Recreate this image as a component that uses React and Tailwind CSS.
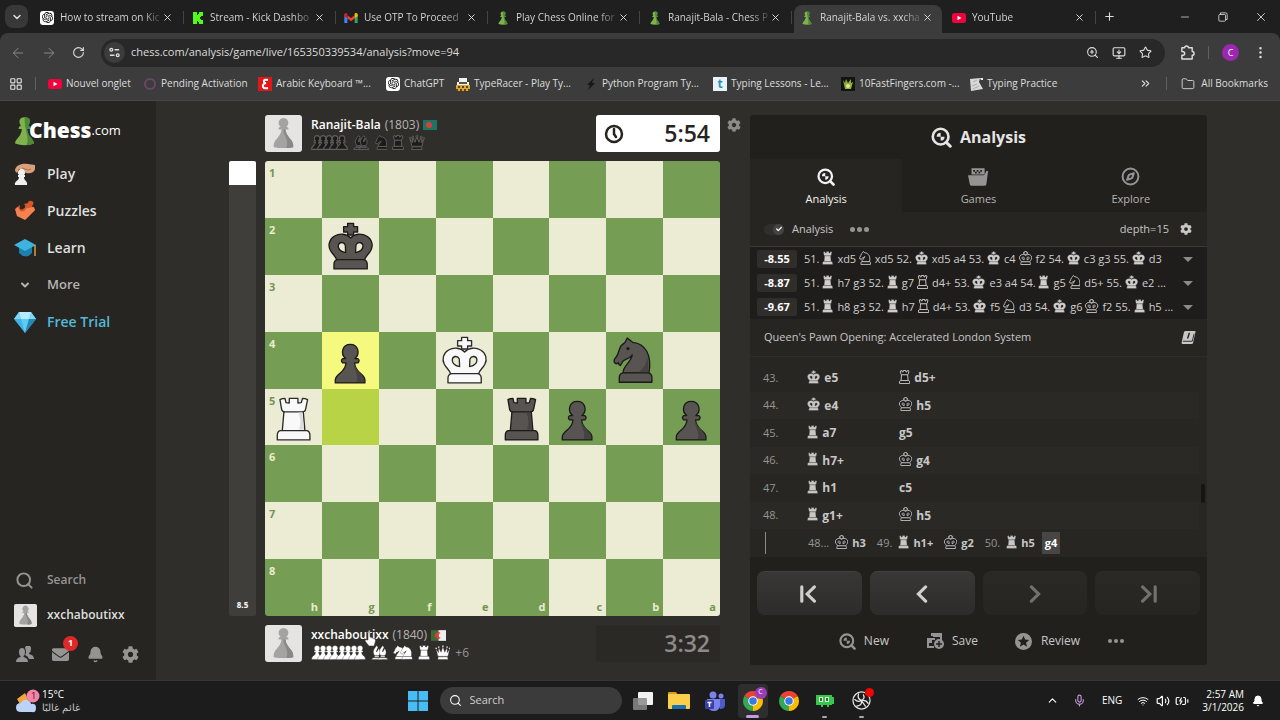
import { Fragment } from "react";
import {
  ArrowLeft,
  ArrowRight,
  BatteryCharging,
  Bell,
  ChevronDown,
  ChevronUp,
  ChevronsRight,
  Compass,
  EllipsisVertical,
  Folder,
  LayoutGrid,
  Mic,
  Minus,
  MonitorDown,
  Plus,
  RotateCw,
  Search,
  Star,
  Volume2,
  Wifi,
  X,
  ZoomIn,
} from "lucide-react";
import { FaCheck, FaCog, FaEnvelope } from "react-icons/fa";
import { SiOpenai } from "react-icons/si";

const CROSS = "M77 51V42H65V26H77V16H95V26H107V42H95V51Z";

const SHAPES = {
  K: {
    box: "17 12 138 146",
    parts: [
      CROSS,
      "M86 60C98 46 120 46 134 54C150 63 155 82 147 97C141 109 131 114 128 126H44C41 114 31 109 25 97C17 82 22 63 38 54C52 46 74 46 86 60ZM71 104C56 101 48 92 49 82C51 72 65 70 70 81ZM101 104C116 101 124 92 123 82C121 72 107 70 102 81Z",
      "M47 125H125Q136 127 136 139V153H36V139Q36 127 47 125Z",
    ],
  },
  Q: {
    box: "10 14 152 144",
    parts: [
      "M20 50L44 88L46 38L68 84L86 30L104 84L126 38L128 88L152 50L134 122H38Z",
      "M12 46A9 9 0 1 0 30 46A9 9 0 1 0 12 46ZM37 34A9 9 0 1 0 55 34A9 9 0 1 0 37 34ZM77 26A9 9 0 1 0 95 26A9 9 0 1 0 77 26ZM117 34A9 9 0 1 0 135 34A9 9 0 1 0 117 34ZM142 46A9 9 0 1 0 160 46A9 9 0 1 0 142 46Z",
      "M42 128H130L136 153H36Z",
    ],
  },
  R: {
    box: "32 23 108 135",
    parts: [
      "M57 67H115L120 126H52Z",
      "M45 32Q52 28 60 28L63 41L73 42V28H99V42L109 41L113 28Q121 28 128 32L122 61Q121 69 112 69H60Q52 69 50 61Z",
      "M46 125H126Q135 127 135 139V153H37V139Q37 127 46 125Z",
    ],
  },
  B: {
    box: "30 12 112 146",
    parts: [
      "M86 18C64 44 48 66 54 92Q58 112 72 116H100Q114 112 118 92C121 74 114 58 106 46L86 80L82 72L98 34Z",
      "M66 120H106L110 132H62Z",
      "M36 153Q38 136 60 136H112Q134 136 136 153Z",
    ],
  },
  N: {
    box: "20 13 122 144",
    parts: [
      "M64 18L80 31C118 34 139 69 129 124H52C47 104 76 92 79 69C69 83 58 80 51 88L43 101Q38 100 37 92L31 96C22 92 22 84 30 76C39 64 38 53 45 42C50 36 55 34 57 31Z",
      "M50 123H128Q138 126 138 137V151H40V137Q40 126 50 123Z",
    ],
  },
  P: {
    box: "34 32 102 126",
    parts: [
      "M40 153V144C41 124 70 124 72 93H62Q55 87 62 80H71C54 65 61 37 85 37C109 37 116 65 99 80H108Q115 87 108 93H98C100 124 128 124 129 144V153Z",
    ],
  },
};

function BoardPiece({ code }) {
  const white = code[0] === "w";
  const kind = code[1];
  return (
    <svg viewBox="0 0 171 171" className="absolute inset-0 h-full w-full">
      <g
        fill={white ? "#f9f9f9" : "#575452"}
        fillRule="evenodd"
        stroke={white ? "#2b2a28" : "#1c1a18"}
        strokeWidth="4"
        strokeLinejoin="round"
      >
        {SHAPES[kind].parts.map((d) => (
          <path key={d} d={d} />
        ))}
      </g>
      {kind === "R" && (
        <path d="M100 71H112L117 122H102Q112 96 100 71Z" fill={white ? "#dcdcdc" : "#454341"} />
      )}
      {kind === "N" && (
        <>
          <path d="M122 70C128 90 128 105 126 121H98C116 108 124 92 122 70Z" fill="#454341" />
          <circle cx="66" cy="50" r="5" fill="#1c1a18" />
        </>
      )}
      {kind === "P" && <path d="M96 95C102 118 124 124 126 143V150H104C112 130 96 118 96 95Z" fill="#454341" />}
    </svg>
  );
}

function MiniPiece({ code, className = "h-[14px]" }) {
  const white = code[0] === "w";
  const shape = SHAPES[code[1]];
  return (
    <svg viewBox={shape.box} className={`inline-block shrink-0 ${className}`}>
      <g
        fill={white ? "currentColor" : "#1c1b19"}
        fillRule="evenodd"
        stroke={white ? "#262522" : "currentColor"}
        strokeWidth={white ? 3 : 9}
        strokeLinejoin="round"
      >
        {shape.parts.map((d) => (
          <path key={d} d={d} />
        ))}
      </g>
    </svg>
  );
}

function GreenPawn({ className }) {
  return (
    <svg viewBox="0 0 40 56" className={className}>
      <path
        d="M2 52C2 42 14 40 15 24H9Q8 20 13 18C7 8 12 2 20 2S33 8 27 18Q32 20 31 24H25C26 40 38 42 38 52Q20 58 2 52Z"
        fill="#7fb24c"
      />
      <path d="M20 2C33 2 33 10 27 18Q32 20 31 24H25C26 40 38 42 38 52Q32 55 24 55C30 40 20 30 20 2Z" fill="#4f8a38" />
    </svg>
  );
}

function YouTubeIcon() {
  return (
    <svg viewBox="0 0 28 20" className="h-[10px] w-[14px] shrink-0">
      <rect width="28" height="20" rx="5" fill="#f0033d" />
      <path d="M11 5.500L19 10L11 14.500Z" fill="#fff" />
    </svg>
  );
}

function GptIcon() {
  return (
    <span className="flex h-[14px] w-[14px] shrink-0 items-center justify-center rounded-[3px] bg-white text-black">
      <SiOpenai size={11} />
    </span>
  );
}

function KickIcon() {
  return (
    <svg viewBox="0 0 12 12" className="h-[12px] w-[12px] shrink-0">
      <path d="M1 0H5V3H6V2H7V0H11V4H9V5H8V7H9V8H11V12H7V10H6V9H5V12H1Z" fill="#53fc18" />
    </svg>
  );
}

function GmailIcon() {
  return (
    <svg viewBox="0 0 24 18" className="h-[10px] w-[14px] shrink-0">
      <path d="M0 2V18H5.500V8Z" fill="#4285f4" />
      <path d="M24 2V18H18.500V8Z" fill="#34a853" />
      <path d="M5.500 4L12 9L18.500 4V10L12 15L5.500 10Z" fill="#ea4335" />
      <path d="M0 3C0 0 3-1 5.500 1V9.500L0 6Z" fill="#c5221f" />
      <path d="M24 3C24 0 21-1 18.500 1V9.500L24 6Z" fill="#fbbc04" />
    </svg>
  );
}

const TAB_PAWN = <GreenPawn className="mx-[2px] h-[14px] w-[10px] shrink-0" />;

const TABS = [
  { title: "How to stream on Kic", icon: <GptIcon /> },
  { title: "Stream - Kick Dashbo", icon: <KickIcon /> },
  { title: "Use OTP To Proceed", icon: <GmailIcon /> },
  { title: "Play Chess Online for", icon: TAB_PAWN },
  { title: "Ranajit-Bala - Chess P", icon: TAB_PAWN },
  { title: "Ranajit-Bala vs. xxcha", icon: TAB_PAWN, active: true },
  { title: "YouTube", icon: <YouTubeIcon /> },
];

const BOOKMARKS = [
  { title: "Nouvel onglet", width: "w-[95px]", icon: <YouTubeIcon /> },
  {
    title: "Pending Activation",
    width: "w-[115px]",
    icon: <span className="mx-px h-[12px] w-[12px] shrink-0 rounded-full border-2 border-[#6a4668]" />,
  },
  {
    title: "Arabic Keyboard ™...",
    width: "w-[128px]",
    icon: (
      <svg viewBox="0 0 14 14" className="h-[14px] w-[14px] shrink-0">
        <rect width="14" height="14" fill="#e01818" />
        <path d="M10 3Q5 2 6 5Q6 6 8 6Q4 7 5 10Q6 12 10 11" fill="none" stroke="#fff" strokeWidth="2" />
      </svg>
    ),
  },
  { title: "ChatGPT", width: "w-[70px]", icon: <GptIcon /> },
  {
    title: "TypeRacer - Play Ty...",
    width: "w-[128px]",
    icon: (
      <svg viewBox="0 0 14 14" className="h-[14px] w-[14px] shrink-0">
        <path d="M3 1H11V5H13V8H1V5H3Z" fill="#f2f2f2" />
        <path d="M3 5H11V7H3Z" fill="#555" />
        <path d="M0 8H14V14H0Z" fill="#e0a92e" />
        <path d="M2 9H4V11H2ZM6 9H8V11H6ZM10 9H12V11H10ZM0 12H2V14H0ZM4 12H6V14H4ZM8 12H10V14H8ZM12 12H14V14H12Z" fill="#5c4310" />
      </svg>
    ),
  },
  {
    title: "Python Program Ty...",
    width: "w-[129px]",
    icon: (
      <svg viewBox="0 0 14 14" className="h-[14px] w-[14px] shrink-0">
        <path d="M10 1L3 8H6L4 13L11 6H8Z" fill="#161616" />
      </svg>
    ),
  },
  {
    title: "Typing Lessons - Le...",
    width: "w-[128px]",
    icon: (
      <span className="flex h-[14px] w-[14px] shrink-0 items-center justify-center bg-[#e9f2f6] text-[12px] leading-none font-bold text-[#2d93b8]">
        t
      </span>
    ),
  },
  {
    title: "10FastFingers.com -...",
    width: "w-[128px]",
    icon: (
      <svg viewBox="0 0 14 14" className="h-[14px] w-[14px] shrink-0">
        <rect width="14" height="14" fill="#10160c" />
        <path d="M2 3L4 6L5 2L7 6L10 2V6L12 5L10 12H4Z" fill="#8fae3c" />
        <circle cx="7" cy="9" r="2" fill="#e8e29a" />
      </svg>
    ),
  },
  {
    title: "Typing Practice",
    width: "w-[96px]",
    icon: (
      <svg viewBox="0 0 14 14" className="h-[14px] w-[14px] shrink-0">
        <path d="M1 2L11 1L10 5L14 12L2 14Z" fill="#d8d8d8" />
        <path d="M11 1H14V3H12Z" fill="#f2f2f2" />
        <path d="M4 5L8 3M3 9L8 7M4 12L10 9" stroke="#a8a8a8" fill="none" />
      </svg>
    ),
  },
];

function TabStrip() {
  return (
    <div className="flex h-[33px] items-end bg-[#1f1f1f]">
      <div className="flex h-full w-8 shrink-0 items-center pl-[5px]">
        <button aria-label="Search tabs" className="flex h-[23px] w-[23px] items-center justify-center rounded-lg bg-[#383838]">
          <ChevronDown size={12} strokeWidth={3} />
        </button>
      </div>
      {TABS.map((tab) => (
        <div key={tab.title} className={`flex h-full w-[152px] min-w-0 items-end ${tab.active ? "px-[2px]" : ""}`}>
          <div
            className={`flex h-[28px] min-w-0 flex-1 items-center pb-[3px] ${
              tab.active ? "rounded-t-lg bg-[#3c3c3c] pr-[9px] pl-[6px]" : "pl-[8px]"
            }`}
          >
            {tab.icon}
            <span className="ml-[6px] min-w-0 flex-1 overflow-hidden bg-linear-to-r from-[#dedede] from-80% to-[#dedede]/10 bg-clip-text whitespace-nowrap text-transparent">
              {tab.title}
            </span>
            <button aria-label={`Close ${tab.title}`}>
              <X size={11} strokeWidth={2} />
            </button>
            {!tab.active && <span className="ml-[10px] h-[13px] w-px bg-[#444]" />}
          </div>
        </div>
      ))}
      <button aria-label="New tab" className="flex h-full w-[26px] items-center justify-center">
        <Plus size={13} />
      </button>
      <div className="ml-auto flex h-full items-center">
        <button aria-label="Minimize" className="flex w-[38px] justify-center">
          <Minus size={12} strokeWidth={1.500} />
        </button>
        <button aria-label="Restore" className="flex w-[38px] justify-center">
          <svg viewBox="0 0 12 12" className="h-[10px] w-[10px]" fill="none" stroke="currentColor">
            <rect x="1" y="3" width="8" height="8" rx="1" />
            <path d="M3 3V1H9Q11 1 11 3V9H9" />
          </svg>
        </button>
        <button aria-label="Close window" className="flex w-[38px] justify-center">
          <X size={14} strokeWidth={1.500} />
        </button>
      </div>
    </div>
  );
}

function Toolbar() {
  return (
    <div className="rounded-t-lg bg-[#3c3c3c]">
      <div className="flex h-[39px] items-center">
        <div className="flex w-[101px] items-center gap-[15px] pl-[10px]">
          <button aria-label="Back" className="text-[#888]">
            <ArrowLeft size={16} strokeWidth={1.500} />
          </button>
          <button aria-label="Forward" className="text-[#888]">
            <ArrowRight size={16} strokeWidth={1.500} />
          </button>
          <button aria-label="Reload">
            <RotateCw size={13} />
          </button>
        </div>
        <div className="flex h-[28px] flex-1 items-center rounded-full bg-[#282828] pr-[13px] pl-[3px]">
          <button aria-label="Site information" className="flex h-[21px] w-[21px] items-center justify-center rounded-full bg-[#3c3c3c]">
            <svg viewBox="0 0 12 12" className="h-[11px] w-[11px]" fill="none" stroke="currentColor" strokeWidth="1.500">
              <circle cx="2.500" cy="3" r="1.500" />
              <path d="M6 3H11M1 9H6" />
              <circle cx="9.500" cy="9" r="1.500" />
            </svg>
          </button>
          <input
            aria-label="Address"
            className="ml-[6px] min-w-0 flex-1 bg-transparent text-[11px] text-[#dcdcdc] outline-none"
            defaultValue="chess.com/analysis/game/live/165350339534/analysis?move=94"
          />
          <div className="flex items-center gap-[13px]">
            <button aria-label="Zoom"><ZoomIn size={13} /></button>
            <button aria-label="Install"><MonitorDown size={14} /></button>
            <button aria-label="Bookmark"><Star size={13} /></button>
          </div>
        </div>
        <div className="flex w-[115px] items-center pl-[15px]">
          <button aria-label="Extensions">
            <svg viewBox="0 0 16 16" className="h-[15px] w-[15px]" fill="none" stroke="currentColor" strokeWidth="1.500" strokeLinejoin="round">
              <path d="M2 3H5Q5 1 7 1T9 3H13V7Q15 7 15 9T13 11V15H2V11Q5 11 5 9T2 7Z" />
            </svg>
          </button>
          <span className="ml-[13px] h-[13px] w-px bg-[#606060]" />
          <button className="ml-[13px] flex h-[17px] w-[17px] items-center justify-center rounded-full bg-[#9c27b0] text-[9px] leading-none text-white">
            C
          </button>
          <button aria-label="Menu" className="ml-[14px]"><EllipsisVertical size={15} /></button>
        </div>
      </div>
      <div className="flex h-[29px] items-center overflow-hidden border-b border-[#474747] pb-[5px] pl-[9px] whitespace-nowrap">
        <LayoutGrid size={14} />
        <span className="mx-[12px] h-[13px] w-px bg-[#606060]" />
        {BOOKMARKS.map((b) => (
          <a key={b.title} href="#" className={`flex shrink-0 items-center gap-[4px] ${b.width}`}>
            {b.icon}
            {b.title}
          </a>
        ))}
        <button aria-label="More bookmarks" className="ml-auto"><ChevronsRight size={13} /></button>
        <span className="mx-[14px] h-[13px] w-px bg-[#606060]" />
        <a href="#" className="mr-[12px] flex items-center gap-[6px]">
          <Folder size={14} strokeWidth={1.500} />
          All Bookmarks
        </a>
      </div>
    </div>
  );
}

function Avatar({ className }) {
  return (
    <svg viewBox="0 0 38 38" className={`shrink-0 ${className}`}>
      <rect width="38" height="38" rx="3" fill="#e6e4e2" />
      <path d="M9 33C8 25 16 24 17 15H14V13L16 12A5 5 0 1 1 22 12L24 13V15H21C22 24 30 25 29 33Q19 35 9 33Z" fill="#a5a3a1" />
      <path d="M19 15H21C22 24 30 25 29 33Q26 34 22 34C25 25 19 22 19 15Z" fill="#8a8886" />
    </svg>
  );
}

const NAV = [
  {
    label: "Play",
    icon: (
      <svg viewBox="0 0 22 22" className="h-[22px] w-[22px]">
        <path d="M1 8C1 2 8 0 14 1L21 2V6C20 10 16 11 12 10L9 7L5 6L3 10Z" fill="#d9a079" />
        <path d="M8 5L14 7L17 6" stroke="#a66f4d" fill="none" />
        <path d="M1 22C0 18 5 18 5 14H4V12H5A3.500 3.500 0 1 1 10 12H11V14H10C10 18 14 18 13 22Z" fill="#efefef" />
      </svg>
    ),
  },
  {
    label: "Puzzles",
    icon: (
      <svg viewBox="0 0 22 22" className="h-[22px] w-[22px]">
        <path d="M2 8L6 5Q5 11 9 9Q13 7 10 4L14 3Q14 0 18 1Q21 3 18 6L21 10L12 19L3 16Z" fill="#d9552b" />
        <path d="M1 9L4 7Q6 13 10 11L13 8L20 7L21 10L11 20L3 16Z" fill="#f58350" />
      </svg>
    ),
  },
  {
    label: "Learn",
    icon: (
      <svg viewBox="0 0 22 22" className="h-[22px] w-[22px]">
        <path d="M5 10H18V16Q12 23 5 16Z" fill="#1d7fae" />
        <path d="M0 8L11 2L22 8L11 14Z" fill="#3db4de" />
        <path d="M21 8V19" stroke="#c9a24a" strokeWidth="1.500" />
      </svg>
    ),
  },
  { label: "More", icon: <ChevronDown size={12} strokeWidth={4} className="text-[#b5b4b3]" />, style: "text-[13px] text-[#b5b4b3]" },
  {
    label: "Free Trial",
    style: "text-[14px] text-[#54b9d6]",
    icon: (
      <svg viewBox="0 0 22 22" className="h-[22px] w-[22px]">
        <path d="M5 1H17L22 8L11 22L0 8Z" fill="#3fb4e6" />
        <path d="M5 1L7 8H0ZM17 1L15 8H22Z" fill="#7fd6f5" />
        <path d="M5 1H17L15 8H7Z" fill="#b5ecfb" />
        <path d="M7 8H15L11 22Z" fill="#5fcbf0" />
        <path d="M15 8H22L11 22Z" fill="#2488bd" />
      </svg>
    ),
  },
];

function Sidebar() {
  return (
    <nav className="flex w-[156px] shrink-0 flex-col bg-[#262522]">
      <a href="#" className="mt-[14px] ml-[14px] flex h-[31px] items-center text-white">
        <GreenPawn className="h-[30px] w-[21px]" />
        <span className="-ml-[6px] text-[21px] leading-none font-extrabold">Chess</span>
        <span className="text-[13px] leading-none font-medium">.com</span>
      </a>
      <div className="mt-[9px]">
        {NAV.map((item) => (
          <a
            key={item.label}
            href="#"
            className={`flex h-[37px] items-center pl-[14px] font-semibold ${item.style || "text-[14px] text-[#dfdfde]"}`}
          >
            <span className="mr-[11px] flex w-[22px] justify-center">{item.icon}</span>
            {item.label}
          </a>
        ))}
      </div>
      <div className="mt-auto pb-[5px]">
        <button className="flex h-[34px] items-center pl-[15px] text-[12px] font-semibold text-[#959493]">
          <Search size={19} strokeWidth={2.500} className="mr-[13px]" />
          Search
        </button>
        <a href="#" className="flex h-[36px] items-center pl-[14px] text-[12px] font-semibold text-[#dfdfde]">
          <Avatar className="mr-[10px] h-[23px] w-[23px]" />
          xxchaboutixx
        </a>
        <div className="flex h-[42px] items-center gap-[18px] pl-[16px] text-[#959493]">
          <button aria-label="Friends">
            <svg viewBox="0 0 18 16" className="h-[16px] w-[18px]" fill="currentColor">
              <path d="M9 2A3 3 0 0 1 15 3Q15 6 13 7V8Q18 9 18 13H13Q12 10 9 9Q11 6 9 2Z" />
              <path d="M3 6Q3 2 6 2T9 6Q9 9 7.500 10V11Q12 12 12 16H0Q0 12 4.500 11V10Q3 9 3 6Z" />
            </svg>
          </button>
          <button aria-label="Messages" className="relative">
            <FaEnvelope size={17} />
            <span className="absolute -top-[10px] -right-[9px] flex h-[15px] w-[15px] items-center justify-center rounded-full bg-[#e02828] text-[9px] font-bold text-white">
              1
            </span>
          </button>
          <button aria-label="Notifications"><Bell size={17} fill="currentColor" /></button>
          <button aria-label="Settings"><FaCog size={17} /></button>
        </div>
      </div>
    </nav>
  );
}

const FILES = ["h", "g", "f", "e", "d", "c", "b", "a"];

const POSITION = {
  g2: "bK",
  g4: "bP",
  e4: "wK",
  b4: "bN",
  h5: "wR",
  d5: "bR",
  c5: "bP",
  a5: "bP",
};

const HIGHLIGHT = { g4: "bg-[#f5f97e]", g5: "bg-[#b9d346]" };

function Board() {
  return (
    <div className="grid aspect-square grid-cols-8 grid-rows-8 overflow-hidden rounded-[3px]">
      {[1, 2, 3, 4, 5, 6, 7, 8].map((rank) =>
        FILES.map((file, col) => {
          const square = file + rank;
          const light = (rank + col) % 2 === 1;
          const label = light ? "text-[#739552]" : "text-[#ebecd0]";
          return (
            <div key={square} className={`relative ${HIGHLIGHT[square] || (light ? "bg-[#ebecd3]" : "bg-[#759d54]")}`}>
              {col === 0 && (
                <span className={`absolute top-[4px] left-[4px] text-[11px] font-bold ${label}`}>{rank}</span>
              )}
              {rank === 8 && (
                <span className={`absolute right-[4px] bottom-[1px] text-[11px] font-bold ${label}`}>{file}</span>
              )}
              {POSITION[square] && <BoardPiece code={POSITION[square]} />}
            </div>
          );
        })
      )}
    </div>
  );
}

function Captured({ groups, color }) {
  return (
    <div className={`flex items-center gap-[5px] ${color}`}>
      {groups.map(([code, count]) => (
        <span key={code} className="flex">
          {Array.from({ length: count }, (_, i) => (
            <MiniPiece key={i} code={code} className={i ? "-ml-[6px] h-[15px]" : "h-[15px]"} />
          ))}
        </span>
      ))}
    </div>
  );
}

function PlayArea() {
  return (
    <div className="flex">
      <div className="mt-[46px] mr-[9px] flex h-[455px] w-[27px] flex-col overflow-hidden rounded-[2px] bg-[#403e3b]">
        <div className="h-[24px] bg-white" />
        <span className="mt-auto mb-[5px] text-center text-[8px] font-bold text-white">8.5</span>
      </div>
      <div className="w-[455px]">
        <div className="flex h-[37px]">
          <Avatar className="h-[37px] w-[37px]" />
          <div className="ml-[9px]">
            <div className="flex h-[20px] items-center text-[12px]">
              <span className="font-semibold text-white">Ranajit-Bala</span>
              <span className="ml-[4px] text-[#b5b4b3]">(1803)</span>
              <svg viewBox="0 0 14 10" className="ml-[4px] h-[10px] w-[14px]">
                <rect width="14" height="10" fill="#1d7464" />
                <circle cx="6" cy="5" r="3" fill="#d8403e" />
              </svg>
            </div>
            <Captured color="text-[#62605e]" groups={[["bP", 5], ["bB", 2], ["bN", 1], ["bR", 1], ["bQ", 1]]} />
          </div>
          <div className="ml-auto flex w-[124px] items-center justify-between rounded-[3px] bg-white pr-[10px] pl-[8px] text-[#262421]">
            <svg viewBox="0 0 20 20" className="h-[20px] w-[20px]" fill="none" stroke="currentColor" strokeWidth="2.500">
              <circle cx="10" cy="10" r="8" />
              <path d="M10 5V10L12 13" strokeLinecap="round" />
            </svg>
            <span className="text-[23px] font-semibold">5:54</span>
          </div>
        </div>
        <div className="my-[9px]">
          <Board />
        </div>
        <div className="relative flex h-[37px]">
          <Avatar className="h-[37px] w-[37px]" />
          <div className="ml-[9px]">
            <div className="flex h-[20px] items-center text-[12px]">
              <span className="font-semibold text-white">xxchaboutixx</span>
              <span className="ml-[4px] text-[#b5b4b3]">(1840)</span>
              <svg viewBox="0 0 14 10" className="ml-[4px] h-[11px] w-[15px]">
                <rect width="7" height="10" fill="#3d6b35" />
                <rect x="7" width="7" height="10" fill="#f1efee" />
                <path d="M9 3A3 3 0 1 0 9 7A2 2 0 1 1 9 3Z" fill="#d8403e" />
              </svg>
            </div>
            <div className="flex items-center">
              <Captured color="text-white" groups={[["wP", 8], ["wB", 2], ["wN", 2], ["wR", 1], ["wQ", 1]]} />
              <span className="ml-[5px] text-[12px] leading-none text-[#959493]">+6</span>
            </div>
          </div>
          <div className="ml-auto flex w-[124px] items-center justify-end rounded-[3px] bg-[#2b2926] pr-[10px] text-[23px] font-semibold text-[#8d8b89]">
            3:32
          </div>
          <svg viewBox="0 0 12 16" className="absolute top-[6px] left-[99px] h-[16px] w-[12px]">
            <path d="M4 1Q6 0 6 2V6L11 8Q12 9 11 12L10 15H5L1 10Q1 8 4 9Z" fill="#fff" stroke="#333" strokeWidth="0.500" />
          </svg>
        </div>
      </div>
      <div className="flex w-[30px] items-start justify-center pt-[3px] pr-[2px] text-[#8d8b89]">
        <button aria-label="Board settings"><FaCog size={14} /></button>
      </div>
    </div>
  );
}

function AnalysisIcon({ className }) {
  return (
    <svg viewBox="0 0 24 24" className={className}>
      <circle cx="11" cy="11" r="9" fill="none" stroke="currentColor" strokeWidth="3" />
      <path d="M17.500 17.500L22 22" stroke="currentColor" strokeWidth="3.500" strokeLinecap="round" />
      <path d="M11 6.500V11H6.500A4.500 4.500 0 0 1 11 6.500ZM11 11H15.500A4.500 4.500 0 0 1 11 15.500Z" fill="currentColor" />
    </svg>
  );
}

function GamesIcon() {
  return (
    <svg viewBox="0 0 24 20" className="h-[18px] w-[21px]" fill="currentColor">
      <path d="M0 8H18L19 7L21 3H23L21 18Q21 20 19 20H4Q2 20 2 18Z" />
      <path d="M4 0H19V7H4ZM6 2V4H8V2ZM8 4V6H10V4ZM10 2V4H12V2ZM12 4V6H14V4ZM14 2V4H16V2Z" fillRule="evenodd" />
    </svg>
  );
}

const LINES = [
  { score: "-8.55", text: "51. wR xd5 bN xd5 52. wK xd5 a4 53. wK c4 bK f2 54. wK c3 g3 55. wK d3" },
  { score: "-8.87", text: "51. wR h7 g3 52. wR g7 bR d4+ 53. wK e3 a4 54. wR g5 bN d5+ 55. wK e2 ..." },
  { score: "-9.67", text: "51. wR h8 g3 52. wR h7 bR d4+ 53. wK f5 bN d3 54. wK g6 bK f2 55. wR h5 ..." },
];

const MOVES = [
  ["43.", "wK e5", "bR d5+"],
  ["44.", "wK e4", "bK h5"],
  ["45.", "wR a7", "g5"],
  ["46.", "wR h7+", "bK g4"],
  ["47.", "wR h1", "c5"],
  ["48.", "wR g1+", "bK h5"],
];

function Notation({ text }) {
  return text.split(" ").map((token, i) => (
    <Fragment key={i}>
      {i > 0 && " "}
      {/^[wb][KQRBN]$/.test(token) ? (
        <MiniPiece code={token} className="-mt-[4px] mr-px h-[14px] align-middle" />
      ) : (
        token
      )}
    </Fragment>
  ));
}

function Move({ text }) {
  return (
    <button className="font-bold whitespace-nowrap text-[#c8c7c6]">
      <Notation text={text} />
    </button>
  );
}

function AnalysisPanel() {
  const tabs = [
    { label: "Analysis", icon: <AnalysisIcon className="h-[18px] w-[18px]" />, active: true },
    { label: "Games", icon: <GamesIcon /> },
    { label: "Explore", icon: <Compass size={19} strokeWidth={2.500} /> },
  ];
  return (
    <section className="flex w-[457px] flex-col overflow-hidden rounded-[3px] bg-[#21201d]">
      <h1 className="flex h-[44px] items-center justify-center gap-[8px] text-[16px] font-bold text-[#e6e5e4]">
        <AnalysisIcon className="h-[21px] w-[21px]" />
        Analysis
      </h1>
      <div className="grid h-[53px] grid-cols-3">
        {tabs.map((tab) => (
          <button
            key={tab.label}
            className={`flex flex-col items-center justify-end gap-[4px] pb-[5px] text-[11px] ${
              tab.active ? "bg-[#262522] text-[#f3f3f2]" : "text-[#b5b4b3]"
            }`}
          >
            <span className={`flex h-[20px] items-center ${tab.active ? "" : "text-[#959493]"}`}>{tab.icon}</span>
            {tab.label}
          </button>
        ))}
      </div>
      <div className="flex h-[35px] items-center border-b border-[#3a3835] bg-[#262522] pr-[15px] pl-[14px] text-[#c8c7c6]">
        <label className="flex items-center gap-[8px] text-[11px]">
          <input type="checkbox" defaultChecked className="peer sr-only" />
          <span className="flex h-[11px] w-[20px] items-center justify-end rounded-full bg-[#302f2c]">
            <span className="flex h-[11px] w-[11px] items-center justify-center rounded-full bg-[#454341] text-white">
              <FaCheck size={6} />
            </span>
          </span>
          Analysis
        </label>
        <button aria-label="More options" className="ml-[17px] flex gap-[2px]">
          <span className="h-[5px] w-[5px] rounded-full bg-[#959493]" />
          <span className="h-[5px] w-[5px] rounded-full bg-[#959493]" />
          <span className="h-[5px] w-[5px] rounded-full bg-[#959493]" />
        </button>
        <span className="ml-auto text-[11px]">depth=15</span>
        <button aria-label="Engine settings" className="ml-[11px]"><FaCog size={12} /></button>
      </div>
      <div className="bg-[#1e1d1b] text-[11px] text-[#d0cfce]">
        {LINES.map((line) => (
          <div key={line.score} className="flex h-[24px] items-center pr-[14px] pl-[7px]">
            <span className="flex h-[18px] w-[40px] shrink-0 items-center justify-center rounded-[2px] bg-[#302e2b] font-bold text-white">
              {line.score}
            </span>
            <span className="ml-[7px] flex-1 whitespace-nowrap">
              <Notation text={line.text} />
            </span>
            <button aria-label="Expand line" className="h-0 w-0 border-x-[5px] border-t-[5px] border-x-transparent border-t-[#8d8b89]" />
          </div>
        ))}
      </div>
      <div className="flex h-[37px] items-center justify-between bg-[#262522] pr-[11px] pl-[14px] text-[11px] text-[#c8c7c6]">
        Queen's Pawn Opening: Accelerated London System
        <button aria-label="Opening book">
          <svg viewBox="0 0 16 16" className="h-[15px] w-[15px]">
            <path d="M5 1H15Q16 1 15 4L13 13Q13 15 11 15H2Q0 15 1 12L3 3Q3 1 5 1Z" fill="#c8c7c6" />
            <path d="M2 12H12L14 4" stroke="#262522" fill="none" />
            <path d="M9 3L7 9" stroke="#262522" strokeWidth="1.500" />
          </svg>
        </button>
      </div>
      <div className="flex flex-1 border-t border-[#302e2b] bg-[#272623] pt-[7px] text-[12px]">
        <div className="flex-1">
          <table className="w-full table-fixed text-left">
            <tbody>
              {MOVES.map(([num, white, black]) => (
                <tr key={num} className="odd:h-[28px] odd:bg-[#272623] even:h-[27px] even:bg-[#2a2926]">
                  <td className="w-[57px] p-0 pl-[13px] text-[11px] text-[#959493]">{num}</td>
                  <td className="w-[92px] p-0"><Move text={white} /></td>
                  <td className="p-0"><Move text={black} /></td>
                </tr>
              ))}
            </tbody>
          </table>
          <div className="flex h-[28px] items-center pl-[15px] text-[11px] whitespace-nowrap text-[#959493]">
            <span className="mr-[42px] h-[22px] w-px bg-[#8d8b89]" />
            <span className="mr-[6px]">48...</span>
            <Move text="bK h3" />
            <span className="mr-[6px] ml-[11px]">49.</span>
            <Move text="wR h1+" />
            <span className="ml-[11px]"><Move text="bK g2" /></span>
            <span className="mr-[6px] ml-[11px]">50.</span>
            <Move text="wR h5" />
            <button className="ml-[7px] h-[22px] bg-[#484644] px-[3px] font-bold text-white">g4</button>
          </div>
        </div>
        <div className="flex w-[8px] flex-col items-center pt-[120px]">
          <span className="h-[19px] w-[4px] rounded-full bg-[#161513]" />
        </div>
      </div>
      <div className="bg-[#21201d] px-[7px] pt-[14px] pb-[12px]">
        <div className="grid grid-cols-4 gap-[8px]">
          {[
            ["First move", "M2 2V18M16 2L8 10L16 18"],
            ["Previous move", "M14 2L6 10L14 18"],
            ["Next move", "M6 2L14 10L6 18"],
            ["Last move", "M18 2V18M4 2L12 10L4 18"],
          ].map(([label, d], i) => (
            <button
              key={label}
              aria-label={label}
              disabled={i > 1}
              className="flex h-[44px] items-center justify-center rounded-lg border-t border-[#43413e] bg-linear-to-b from-[#393735] to-[#2e2c2a] text-[#d0cfce] disabled:border-[#2c2b28] disabled:from-[#2a2926] disabled:to-[#262522] disabled:text-[#73716f]"
            >
              <svg viewBox="0 0 20 20" className="h-[18px] w-[18px]" fill="none" stroke="currentColor" strokeWidth="3.500" strokeLinecap="round">
                <path d={d} />
              </svg>
            </button>
          ))}
        </div>
        <div className="mt-[14px] flex h-[24px] items-center justify-center pl-[6px] text-[12px] text-[#c8c7c6]">
          <button className="flex items-center gap-[8px]">
            <AnalysisIcon className="h-[17px] w-[17px] text-[#959493]" />
            New
          </button>
          <button className="ml-[37px] flex items-center gap-[8px]">
            <svg viewBox="0 0 18 18" className="h-[18px] w-[18px]" fill="#959493">
              <path d="M5 1H16V8H14V5H7V4H5ZM1 6H9V8H3V14H8V16H1Z" />
              <path d="M3 8H6V11H3Z" />
              <circle cx="13" cy="12" r="5" />
              <path d="M13 9V15M10 12H16" stroke="#21201d" strokeWidth="1.500" />
            </svg>
            Save
          </button>
          <button className="ml-[37px] flex items-center gap-[9px]">
            <svg viewBox="0 0 18 18" className="h-[17px] w-[17px]">
              <circle cx="9" cy="9" r="9" fill="#959493" />
              <path d="M9 3L10.700 7L15 7.400L11.700 10.200L12.800 14.500L9 12.200L5.200 14.500L6.300 10.200L3 7.400L7.300 7Z" fill="#21201d" />
            </svg>
            Review
          </button>
          <button aria-label="More" className="ml-[28px] flex gap-[2px]">
            <span className="h-[4px] w-[4px] rounded-full bg-[#959493]" />
            <span className="h-[4px] w-[4px] rounded-full bg-[#959493]" />
            <span className="h-[4px] w-[4px] rounded-full bg-[#959493]" />
          </button>
        </div>
      </div>
    </section>
  );
}

function ChromeLogo() {
  return (
    <svg viewBox="0 0 40 40" className="h-[20px] w-[20px]">
      <path d="M20 20L2.700 10A20 20 0 0 1 37.300 10Z" fill="#ea4335" />
      <path d="M20 20L37.300 10A20 20 0 0 1 20 40Z" fill="#fbbc04" />
      <path d="M20 20V40A20 20 0 0 1 2.700 10Z" fill="#34a853" />
      <path d="M20 11H37.800L37.300 10H20Z" fill="#ea4335" />
      <circle cx="20" cy="20" r="9.500" fill="#fff" />
      <circle cx="20" cy="20" r="7.500" fill="#3b78e7" />
    </svg>
  );
}

function Taskbar() {
  return (
    <footer className="grid h-[40px] shrink-0 grid-cols-[1fr_auto_1fr] items-center border-t border-[#373737] bg-[#1c1c1c] text-white">
      <div className="flex items-center pl-[16px]">
        <svg viewBox="0 0 24 26" className="h-[26px] w-[24px]">
          <path d="M1 11L9 5L14 16H4Z" fill="#f0a63a" />
          <path d="M5 24Q0 24 0 19.500T5 15Q7 11 11 12T15 16Q20 15 20 20T16 24Z" fill="#bcd3f7" />
          <circle cx="17" cy="8" r="6.500" fill="#f583a8" />
          <text x="15" y="11" fontSize="9" fill="#3a1522">1</text>
        </svg>
        <div className="ml-[2px] text-[10px] leading-[13px]">
          <div>15°C</div>
          <div dir="rtl" className="text-[#c8c8c8]">غائم غالبًا</div>
        </div>
      </div>
      <div className="flex items-center">
        <svg viewBox="0 0 20 20" className="h-[20px] w-[20px]" fill="#48bdf5">
          <path d="M0 0H9.500V9.500H0ZM10.500 0H20V9.500H10.500ZM0 10.500H9.500V20H0ZM10.500 10.500H20V20H10.500Z" />
        </svg>
        <label className="ml-[12px] flex h-[27px] w-[182px] items-center rounded-full bg-[#3b3b3b] pl-[9px]">
          <Search size={13} />
          <input
            aria-label="Search"
            placeholder="Search"
            className="ml-[8px] w-[120px] bg-transparent text-[11px] outline-none placeholder:text-[#d0d0d0]"
          />
        </label>
        <svg viewBox="0 0 20 18" className="ml-[11px] h-[18px] w-[20px]">
          <rect x="5" width="15" height="13" rx="1" fill="#f2f2f2" />
          <rect y="6" width="14" height="12" rx="1" fill="#8a8a8a" fillOpacity="0.850" />
        </svg>
        <svg viewBox="0 0 22 19" className="ml-[15px] h-[19px] w-[22px]">
          <path d="M0 2Q0 1 1 1H8L10 4H0Z" fill="#d99b1c" />
          <rect y="3" width="22" height="15" rx="1" fill="#fbcf4a" />
          <path d="M4 18V15Q4 14 5 14H17Q18 14 18 15V18Z" fill="#1573b5" />
        </svg>
        <svg viewBox="0 0 20 20" className="ml-[15px] h-[20px] w-[20px]">
          <circle cx="8" cy="4" r="3.500" fill="#7b83eb" />
          <circle cx="16" cy="5" r="2.500" fill="#7b83eb" />
          <path d="M12 8H20V14Q20 18 15 18Z" fill="#5059c9" />
          <path d="M2 8H15V15Q14 20 9 20T2 15Z" fill="#7b83eb" />
          <rect y="9" width="9" height="9" rx="1" fill="#3940ab" />
          <path d="M2.500 11.500H6.500M4.500 11.500V16" stroke="#fff" strokeWidth="1.500" />
        </svg>
        <div className="relative ml-[13px] flex h-[34px] w-[30px] items-center justify-center rounded bg-[#2e2e2e]">
          <ChromeLogo />
          <span className="absolute top-[3px] right-[1px] flex h-[12px] w-[12px] items-center justify-center rounded-full bg-[#9c3cb5] text-[7px]">
            C
          </span>
          <span className="absolute bottom-0 h-[3px] w-[13px] rounded-full bg-[#c79be0]" />
        </div>
        <span className="ml-[11px]"><ChromeLogo /></span>
        <div className="relative ml-[16px] flex h-[34px] w-[20px] items-center justify-center">
          <svg viewBox="0 0 18 13" className="h-[13px] w-[18px]">
            <path d="M0 1H16V3H18V10H16V11H13V13H11V11H7V13H5V11H0Z" fill="#35c84a" />
            <path d="M3 3H7V8H3ZM9 3H13V8H9Z" fill="#d8f5d5" />
            <path d="M4 4H6V7H4ZM10 4H12V7H10Z" fill="#4d5f4b" />
          </svg>
          <span className="absolute bottom-0 h-[2px] w-[5px] rounded-full bg-[#a8a8a8]" />
        </div>
        <div className="relative ml-[16px] flex h-[34px] w-[22px] items-center justify-center">
          <svg viewBox="0 0 20 20" className="h-[19px] w-[19px]" fill="none" stroke="#e6e6e6" strokeWidth="1.300" strokeLinecap="round">
            <circle cx="10" cy="10" r="9" />
            <path d="M7 3Q5 8 10 10Q15 9 17 13M10 10Q11 15 5 16M10 10Q14 8 12 4M3 9Q6 12 10 10M10 10Q12 13 14 16" />
          </svg>
          <span className="absolute top-[4px] -right-[1px] h-[9px] w-[9px] rounded-full bg-[#f00505]" />
          <span className="absolute bottom-0 h-[2px] w-[5px] rounded-full bg-[#a8a8a8]" />
        </div>
      </div>
      <div className="flex items-center justify-end pr-[16px]">
        <ChevronUp size={13} />
        <Mic size={13} className="ml-[14px] text-[#c79be0]" />
        <span className="ml-[16px] text-[10px]">ENG</span>
        <Wifi size={12} className="ml-[15px]" />
        <Volume2 size={14} className="ml-[7px]" />
        <BatteryCharging size={14} className="ml-[5px]" />
        <div className="ml-[13px] text-right text-[10px] leading-[13px]">
          <div>2:57 AM</div>
          <div>3/1/2026</div>
        </div>
        <Bell size={12} fill="currentColor" className="ml-[8px]" />
      </div>
    </footer>
  );
}

export default function App() {
  return (
    <div className="flex min-h-screen flex-col bg-[#1f1f1f] font-['Open_Sans','Noto_Sans',sans-serif] text-[10px] text-[#dedede]">
      <header>
        <TabStrip />
        <Toolbar />
      </header>
      <div className="flex flex-1 bg-[#302e2b]">
        <Sidebar />
        <main className="flex flex-1 items-start justify-center pt-[14px] pb-[15px]">
          <div className="flex items-stretch">
            <PlayArea />
            <AnalysisPanel />
          </div>
        </main>
      </div>
      <Taskbar />
    </div>
  );
}
